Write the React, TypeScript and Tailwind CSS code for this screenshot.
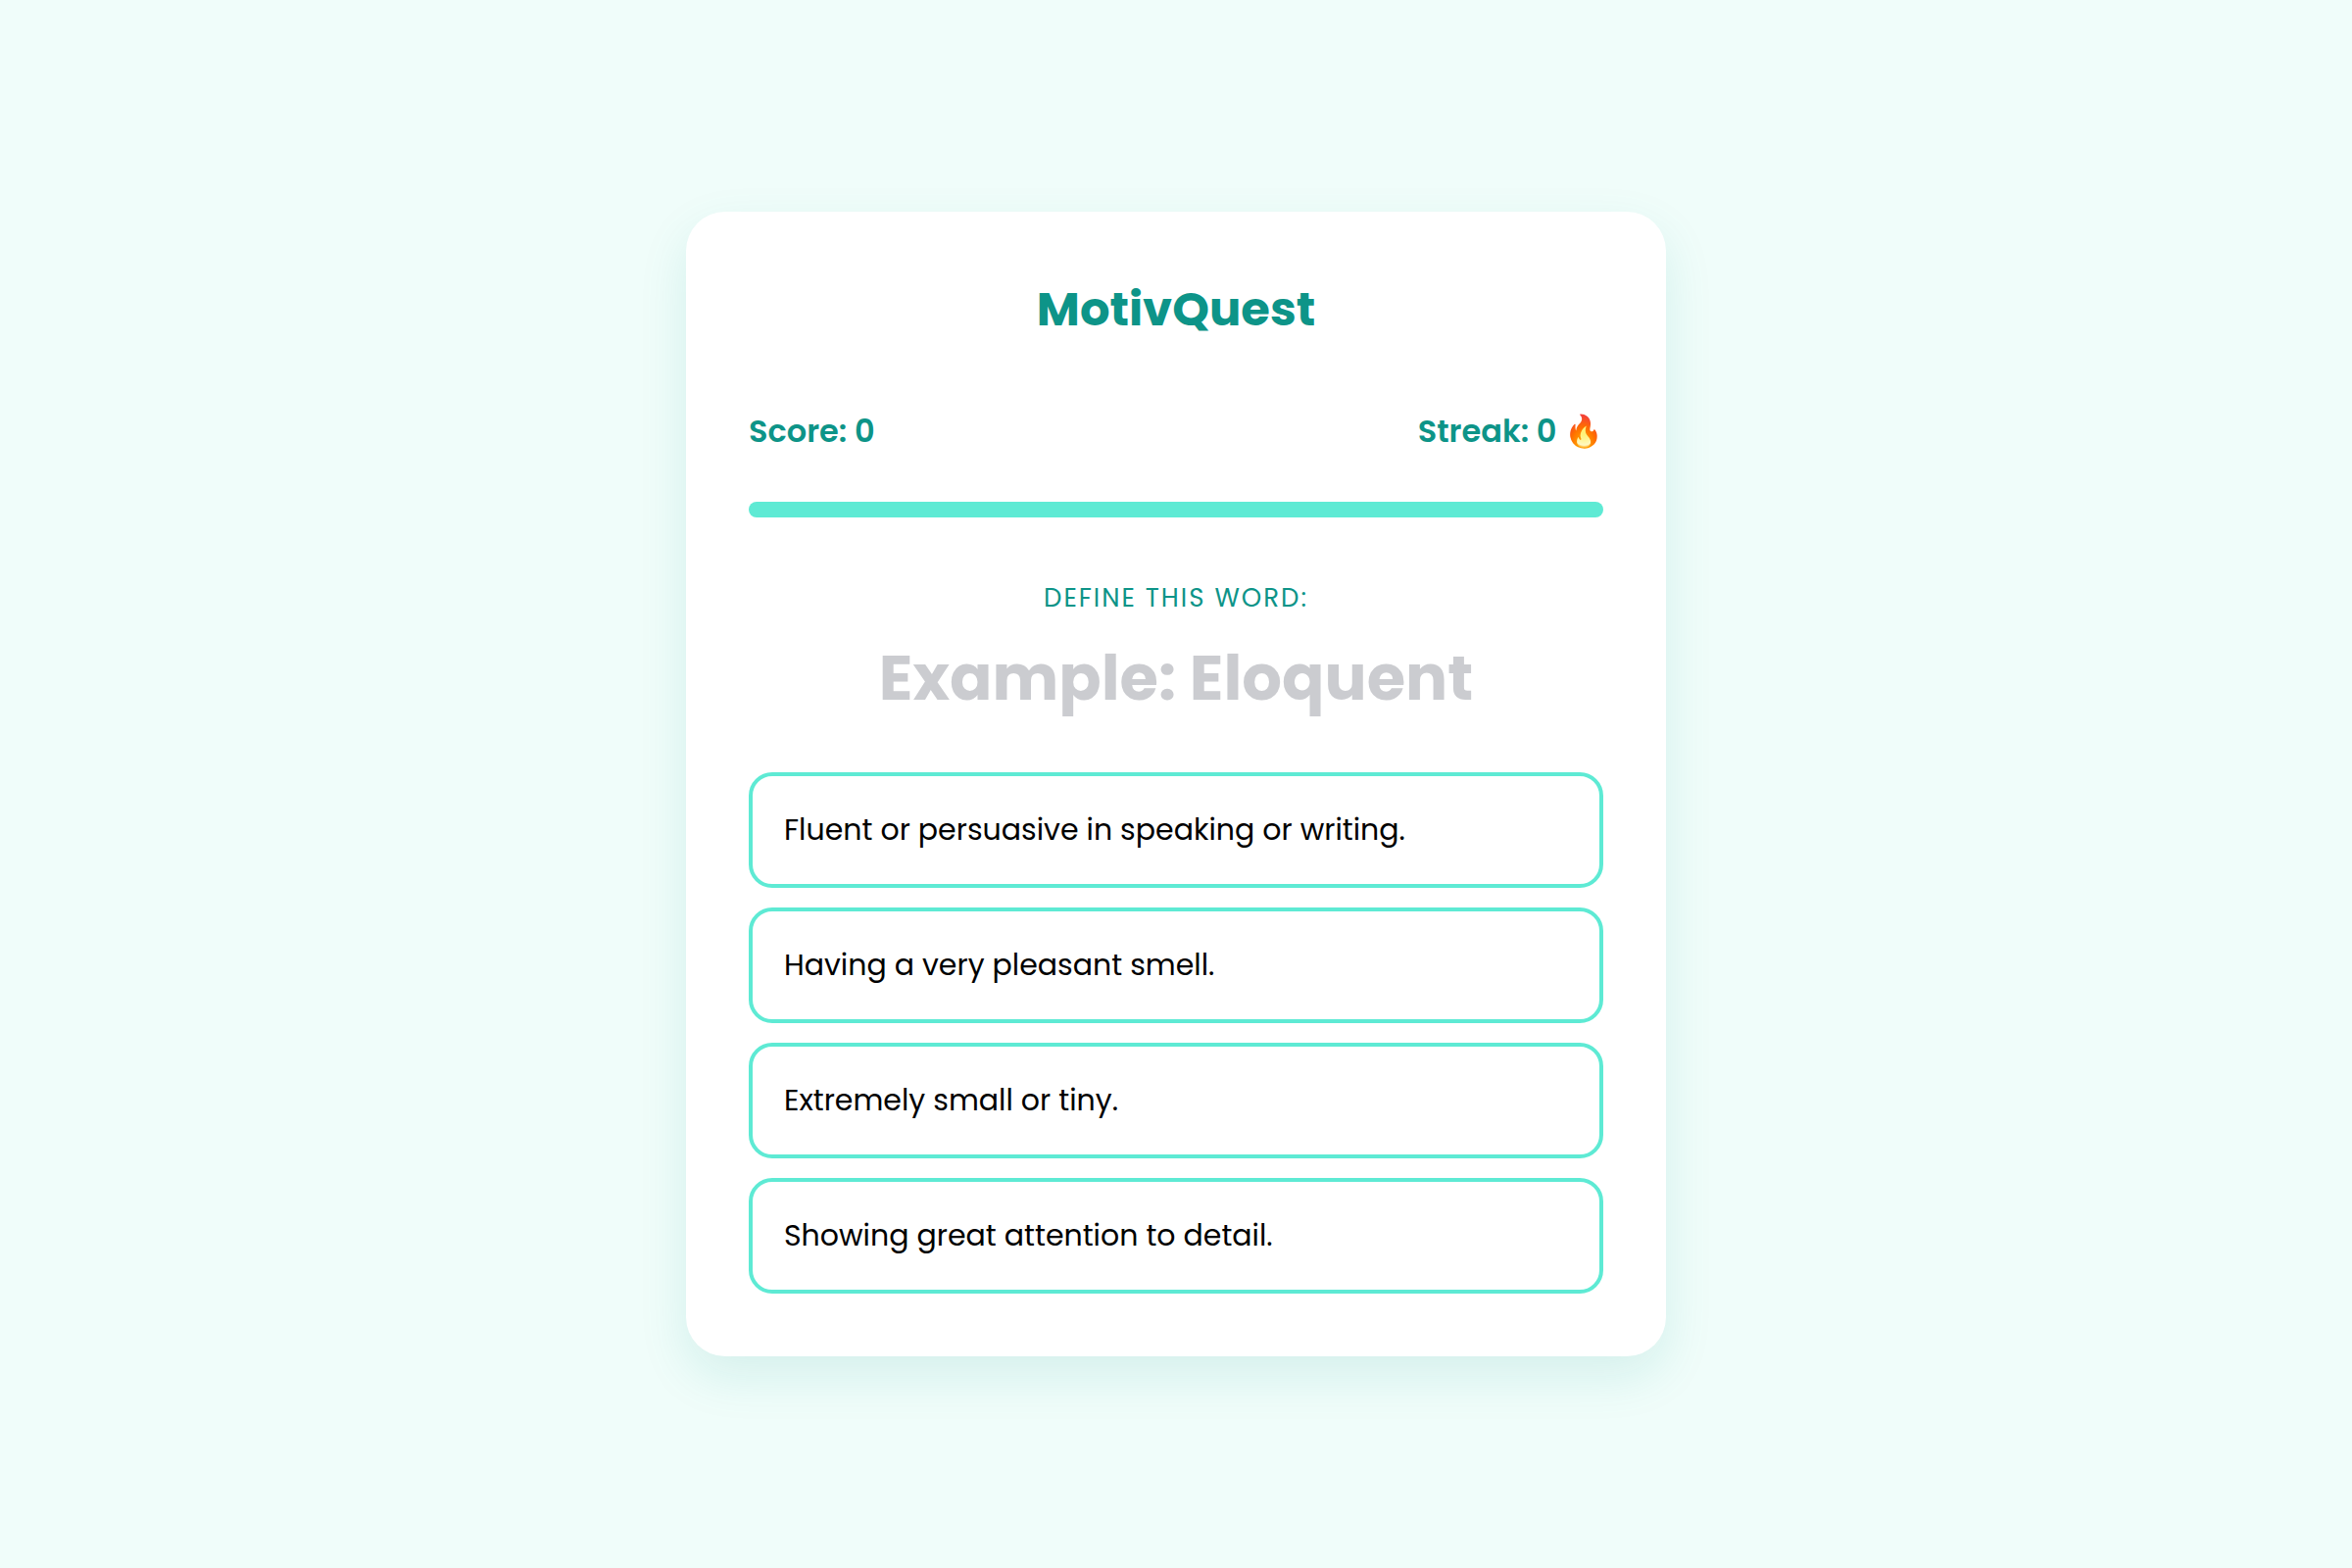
import { useState } from 'react';

const ROUND = {
  word: 'Example: Eloquent',
  answer: 0,
  options: [
    'Fluent or persuasive in speaking or writing.',
    'Having a very pleasant smell.',
    'Extremely small or tiny.',
    'Showing great attention to detail.',
  ],
};

export default function App() {
  const [score, setScore] = useState(0);
  const [streak, setStreak] = useState(0);

  const choose = (index: number) => {
    if (index === ROUND.answer) {
      setScore(score + 1);
      setStreak(streak + 1);
    } else {
      setStreak(0);
    }
  };

  return (
    <div className="min-h-screen bg-[#f0fdfa] flex items-center justify-center font-[Poppins,Inter,sans-serif]">
      <main className="w-full max-w-[1000px] rounded-[40px] bg-white p-16 shadow-[0_20px_50px_rgba(13,148,136,0.12)]">
        <h1 className="mb-16 text-center text-[48px] leading-[72px] font-bold text-[#0d9488]">MotivQuest</h1>

        <div className="mb-12 flex justify-between text-[32px] leading-[48px] font-semibold text-[#0d9488]">
          <span>Score: {score}</span>
          <span>Streak: {streak} 🔥</span>
        </div>

        <div className="mb-16 h-4 rounded-lg bg-[#5eead4]" />

        <p className="mb-4 text-center text-[26px] leading-9 tracking-[2px] uppercase text-[#0d9488]">Define this word:</p>
        <h2 className="mb-12 text-center text-[64px] leading-[96px] font-bold text-[#cbccd0]">{ROUND.word}</h2>

        <div className="flex flex-col gap-5">
          {ROUND.options.map((option, i) => (
            <button
              key={option}
              type="button"
              onClick={() => choose(i)}
              className="rounded-3xl border-4 border-[#5eead4] bg-white p-8 text-left text-[30px] leading-[46px] text-black"
            >
              {option}
            </button>
          ))}
        </div>
      </main>
    </div>
  );
}
